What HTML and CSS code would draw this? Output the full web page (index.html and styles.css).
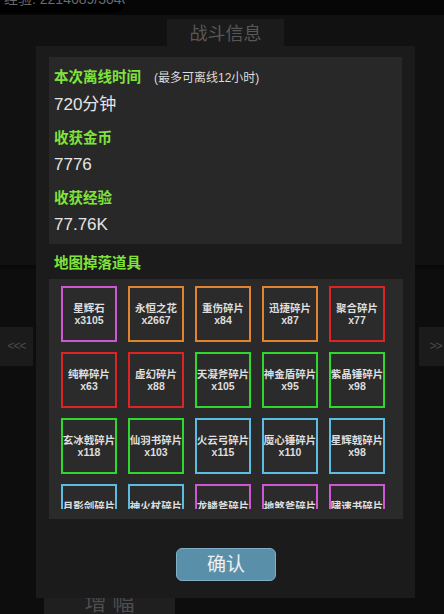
FILE: index.html
```html
<!DOCTYPE html>
<html lang="zh">
<head>
<meta charset="utf-8">
<title>战斗信息</title>
<link rel="stylesheet" href="styles.css">
</head>
<body>
<div class="scene">
  <div class="topbar">
    <div class="exp"><span class="exp-text">经验: 2214689/3046</span></div>
  </div>
  <div class="upper"></div>
  <div class="lower">
    <div class="nav">
      <div class="nav-btn nav-left">&lt;&lt;&lt;</div>
      <div class="nav-btn nav-right">&gt;&gt;</div>
    </div>
    <div class="bottom-tab">增幅</div>
  </div>
</div>

<div class="modal">
  <div class="tab">战斗信息</div>
  <div class="panel">
    <div class="info">
      <div class="group">
        <div class="label">本次离线时间<span class="note">(最多可离线12小时)</span></div>
        <div class="value">720分钟</div>
      </div>
      <div class="group">
        <div class="label">收获金币</div>
        <div class="value">7776</div>
      </div>
      <div class="group">
        <div class="label">收获经验</div>
        <div class="value">77.76K</div>
      </div>
    </div>
    <div class="label drops-title">地图掉落道具</div>
    <div class="drops">
      <div class="scroll">
        <div class="grid">
          <div class="item purple"><span>星辉石</span><span>x3105</span></div>
          <div class="item orange"><span>永恒之花</span><span>x2667</span></div>
          <div class="item orange"><span>重伤碎片</span><span>x84</span></div>
          <div class="item orange"><span>迅捷碎片</span><span>x87</span></div>
          <div class="item red"><span>聚合碎片</span><span>x77</span></div>

          <div class="item red"><span>纯粹碎片</span><span>x63</span></div>
          <div class="item red"><span>虚幻碎片</span><span>x88</span></div>
          <div class="item green"><span>天凝斧碎片</span><span>x105</span></div>
          <div class="item green"><span>神金盾碎片</span><span>x95</span></div>
          <div class="item green"><span>紫晶锤碎片</span><span>x98</span></div>

          <div class="item green"><span>玄冰戟碎片</span><span>x118</span></div>
          <div class="item green"><span>仙羽书碎片</span><span>x103</span></div>
          <div class="item cyan"><span>火云弓碎片</span><span>x115</span></div>
          <div class="item cyan"><span>魔心锤碎片</span><span>x110</span></div>
          <div class="item cyan"><span>星辉戟碎片</span><span>x98</span></div>

          <div class="item cyan"><span>月影剑碎片</span><span>x92</span></div>
          <div class="item cyan"><span>神火杖碎片</span><span>x86</span></div>
          <div class="item purple"><span>龙鳞斧碎片</span><span>x41</span></div>
          <div class="item purple"><span>地煞斧碎片</span><span>x37</span></div>
          <div class="item purple"><span>啸速书碎片</span><span>x35</span></div>
        </div>
      </div>
    </div>
    <div class="actions">
      <button class="confirm" type="button">确认</button>
    </div>
  </div>
</div>
</body>
</html>
```

FILE: styles.css
```css
* {
  box-sizing: border-box;
}

html, body {
  margin: 0;
  padding: 0;
  width: 444px;
  height: 614px;
  overflow: hidden;
  background: #0e0e0e;
  font-family: "Liberation Sans", "Noto Sans CJK SC", sans-serif;
}

.scene {
  display: flex;
  flex-direction: column;
  height: 614px;
}

.topbar {
  height: 15px;
  background: #060606;
  overflow: hidden;
}

.exp {
  width: 125px;
  height: 13px;
  background: #000;
  border-bottom-right-radius: 10px;
  overflow: hidden;
}

.exp-text {
  display: block;
  margin-top: -9px;
  padding-left: 4px;
  font-size: 14px;
  line-height: 16px;
  color: #6a6a6a;
  white-space: nowrap;
}

.upper {
  height: 254px;
  background: #111111;
  border-bottom: 4px solid #0a0a0a;
}

.lower {
  flex: 1;
  display: flex;
  flex-direction: column;
  background: #0d0d0d;
}

.nav {
  display: flex;
  justify-content: space-between;
  margin-top: 58px;
  margin-right: -8px;
}

.nav-btn {
  width: 33px;
  height: 39px;
  background: #1b1b1b;
  color: #4a4a4a;
  font-size: 12px;
  line-height: 39px;
  text-align: center;
  letter-spacing: -1px;
}

.bottom-tab {
  margin-top: auto;
  margin-left: 44px;
  width: 131px;
  height: 26px;
  background: #1f1f1f;
  color: #4d4d4d;
  font-size: 22px;
  line-height: 30px;
  text-align: center;
  letter-spacing: 6px;
  padding-left: 6px;
}

/* modal overlay */
.modal {
  position: absolute;
  top: 19px;
  left: 36px;
  width: 379px;
}

.tab {
  margin-left: 131px;
  width: 117px;
  height: 27px;
  background: #1b1b1b;
  color: #575757;
  font-size: 18px;
  line-height: 30px;
  text-align: center;
}

.panel {
  background: #1b1b1b;
  padding: 11px 13px 17px 13px;
}

.info {
  background: #282828;
  padding: 10px 5px 9px 5px;
}

.group + .group {
  margin-top: 13px;
}

.label {
  color: #80e33c;
  font-size: 14.5px;
  font-weight: bold;
  line-height: 20px;
  white-space: nowrap;
}

.note {
  margin-left: 13px;
  color: #dcdcdc;
  font-size: 12px;
  font-weight: normal;
}

.value {
  margin-top: 7px;
  color: #e4e4e4;
  font-size: 17px;
  line-height: 20px;
}

.drops-title {
  margin-top: 9px;
  padding-left: 5px;
}

.drops {
  margin-top: 6px;
  width: 354px;
  background: #2a2a2a;
  padding: 7px 0 10px 12px;
}

.scroll {
  height: 223px;
  overflow: hidden;
}

.grid {
  display: grid;
  grid-template-columns: repeat(5, 56px);
  column-gap: 11px;
  row-gap: 10px;
}

.item {
  width: 56px;
  height: 56px;
  border: 2px solid #888;
  background: #2b2b2b;
  display: flex;
  flex-direction: column;
  align-items: center;
  justify-content: center;
  color: #dedede;
  font-size: 10.5px;
  font-weight: bold;
  line-height: 12px;
  white-space: nowrap;
}

.purple { border-color: #cf56d4; }
.orange { border-color: #e0842e; }
.red    { border-color: #dd2424; }
.green  { border-color: #2fd82f; }
.cyan   { border-color: #5bbde2; }

.actions {
  display: flex;
  justify-content: center;
  margin-top: 29px;
  padding-left: 1px;
}

.confirm {
  width: 100px;
  height: 33px;
  background: #5a8fa9;
  border: 1px solid #80b0c6;
  border-radius: 6px;
  color: #f0f0f0;
  font-family: "Liberation Sans", "Noto Sans CJK SC", sans-serif;
  font-size: 19px;
  line-height: 30px;
  padding: 0;
}
```
